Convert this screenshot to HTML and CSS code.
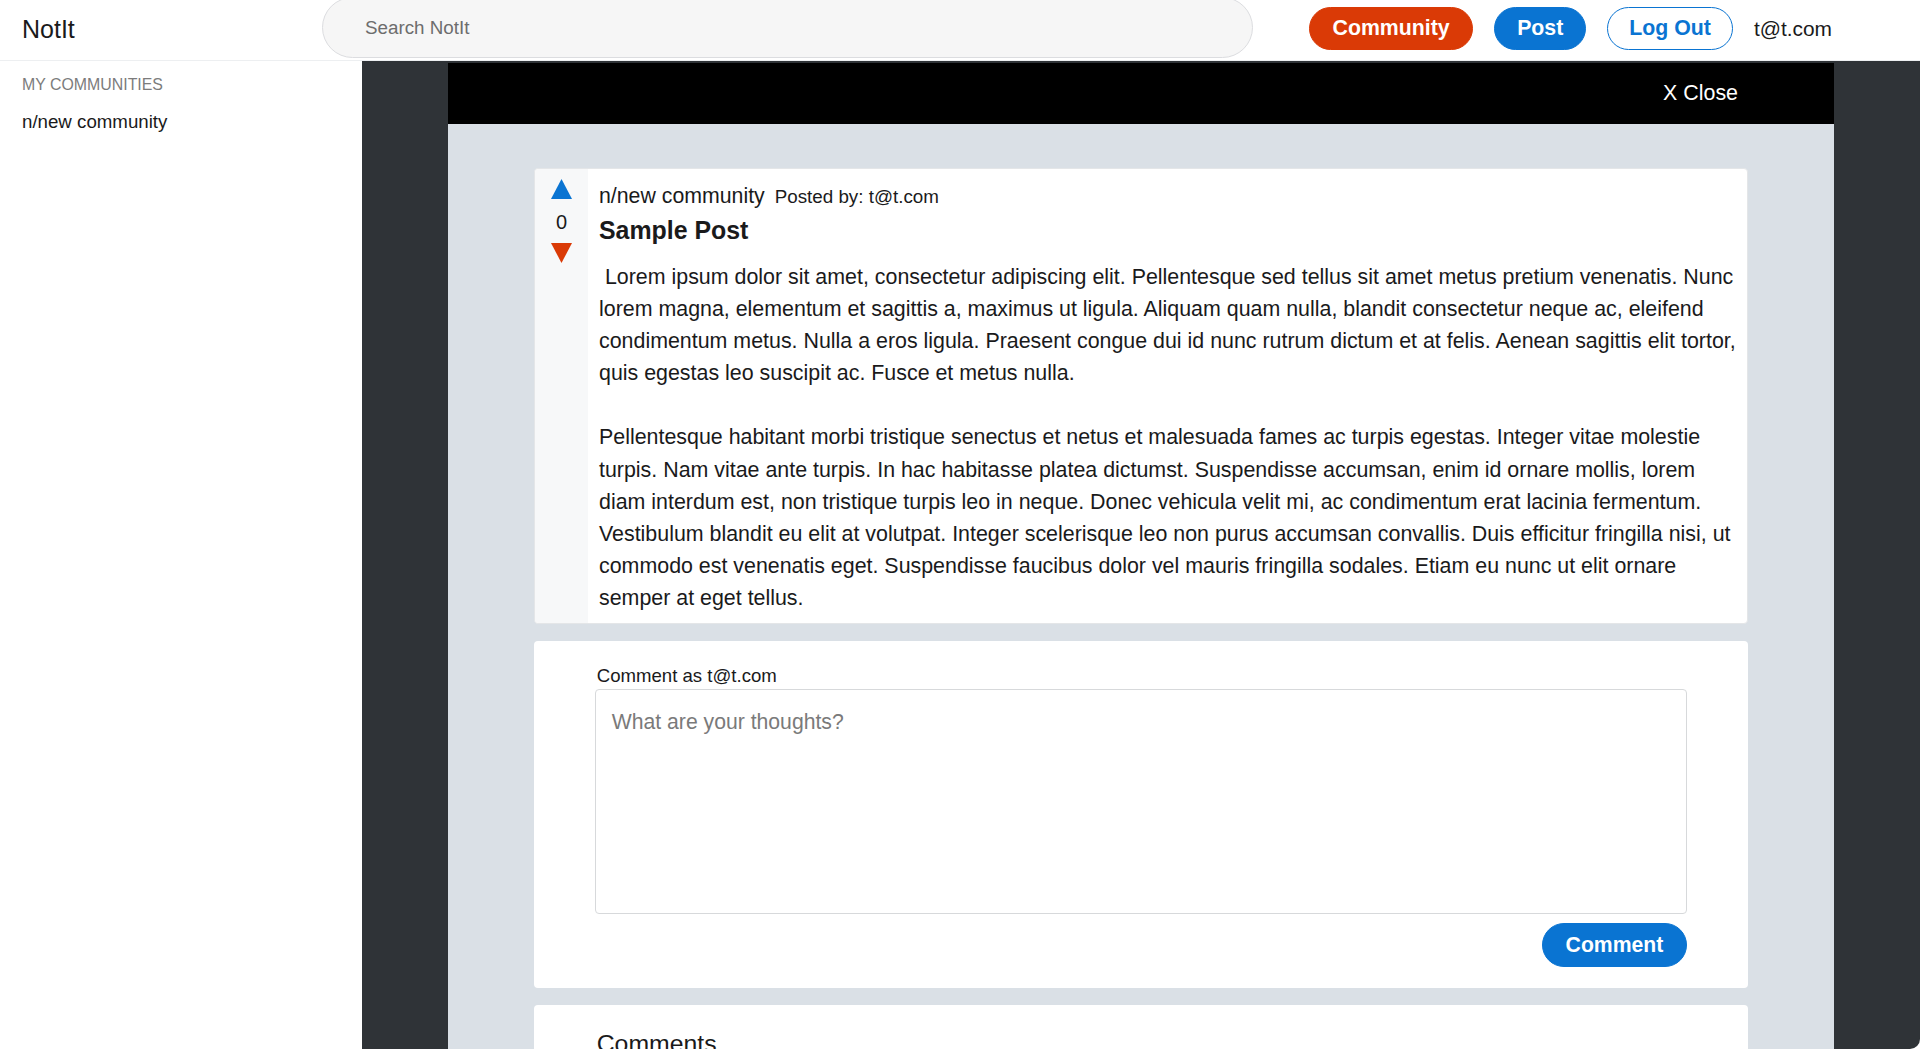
FILE: index.html
```html
<!DOCTYPE html>
<html lang="en">
<head>
<meta charset="utf-8">
<title>NotIt</title>
<link rel="stylesheet" href="styles.css">
</head>
<body>
<header class="topbar">
  <div class="logo">NotIt</div>
  <div class="search"><input class="search-input" type="text" placeholder="Search NotIt"></div>
  <nav class="actions">
    <button class="btn btn-orange">Community</button>
    <button class="btn btn-blue btn-post">Post</button>
    <button class="btn btn-outline">Log Out</button>
    <span class="user">t@t.com</span>
  </nav>
</header>
<div class="layout">
  <aside class="sidebar">
    <div class="side-title">My Communities</div>
    <div class="side-item">n/new community</div>
  </aside>
  <main class="overlay">
    <div class="modal">
      <div class="modal-bar"><span class="close">X Close</span></div>
      <div class="modal-body">
        <article class="post card">
          <div class="votes">
            <svg class="arrow" width="21" height="20" viewBox="0 0 21 20"><polygon points="10.5,0 21,20 0,20" fill="#0a74d2"/></svg>
            <div class="count">0</div>
            <svg class="arrow" width="21" height="20" viewBox="0 0 21 20"><polygon points="0,0 21,0 10.5,20" fill="#da3a06"/></svg>
          </div>
          <div class="post-content">
            <div class="meta"><span class="community">n/new community</span><span class="by">Posted by: t@t.com</span></div>
            <h1 class="title">Sample Post</h1>
            <div class="body-text"> Lorem ipsum dolor sit amet, consectetur adipiscing elit. Pellentesque sed tellus sit amet metus pretium venenatis. Nunc lorem magna, elementum et sagittis a, maximus ut ligula. Aliquam quam nulla, blandit consectetur neque ac, eleifend condimentum metus. Nulla a eros ligula. Praesent congue dui id nunc rutrum dictum et at felis. Aenean sagittis elit tortor, quis egestas leo suscipit ac. Fusce et metus nulla.

Pellentesque habitant morbi tristique senectus et netus et malesuada fames ac turpis egestas. Integer vitae molestie turpis. Nam vitae ante turpis. In hac habitasse platea dictumst. Suspendisse accumsan, enim id ornare mollis, lorem diam interdum est, non tristique turpis leo in neque. Donec vehicula velit mi, ac condimentum erat lacinia fermentum. Vestibulum blandit eu elit at volutpat. Integer scelerisque leo non purus accumsan convallis. Duis efficitur fringilla nisi, ut commodo est venenatis eget. Suspendisse faucibus dolor vel mauris fringilla sodales. Etiam eu nunc ut elit ornare semper at eget tellus.</div>
          </div>
        </article>
        <section class="card comment-box">
          <div class="inner">
            <div class="comment-label">Comment as t@t.com</div>
            <textarea class="comment-input" placeholder="What are your thoughts?"></textarea>
            <div class="comment-actions"><button class="btn btn-blue btn-comment">Comment</button></div>
          </div>
        </section>
        <section class="card comments">
          <div class="inner">
            <h2 class="comments-title">Comments</h2>
          </div>
        </section>
      </div>
    </div>
  </main>
</div>
</body>
</html>
```
FILE: styles.css
```css
* { box-sizing: border-box; }
html, body {
  margin: 0;
  height: 100%;
  overflow: hidden;
  background: #ffffff;
  font-family: "Liberation Sans", Arial, sans-serif;
  color: #1a1a1b;
}
.topbar {
  height: 61px;
  display: flex;
  align-items: flex-start;
  border-bottom: 1px solid #edeff1;
  background: #fff;
}
.logo {
  width: 322px;
  padding-left: 22px;
  font-size: 25px;
  line-height: 58px;
  color: #1a1a1b;
}
.search {
  width: 931px;
  height: 61px;
  margin-top: -3px;
}
.search-input {
  width: 100%;
  height: 100%;
  border: 1px solid #dcdde0;
  border-radius: 31px;
  background: #f6f6f6;
  padding: 0 0 0 42px;
  font-family: "Liberation Sans", Arial, sans-serif;
  font-size: 18.8px;
  color: #1a1a1b;
  outline: none;
}
.search-input::placeholder { color: #6d6d6d; }
.actions {
  display: flex;
  align-items: center;
  gap: 21px;
  margin-left: 56px;
  margin-top: 7px;
}
.btn {
  height: 43px;
  border-radius: 22px;
  padding: 0 22.5px;
  font-family: "Liberation Sans", Arial, sans-serif;
  font-weight: bold;
  font-size: 21.3px;
  border: 1px solid transparent;
  cursor: pointer;
}
.btn-orange { background: #da3a06; color: #fff; border-color: #da3a06; }
.btn-blue { background: #0a74d2; color: #fff; border-color: #0a74d2; }
.btn-post { padding: 0 22px; }
.btn-outline { background: #fff; color: #0a74d2; border-color: #0a74d2; padding: 0 21px; }
.user { font-size: 20.9px; color: #1a1a1b; margin-left: 0; }

.layout {
  display: flex;
  height: calc(100% - 61px);
}
.sidebar {
  width: 362px;
  flex: 0 0 362px;
  padding: 15px 0 0 22px;
  background: #fff;
}
.side-title {
  font-size: 15.9px;
  text-transform: uppercase;
  color: #7c7c7c;
  line-height: 18px;
}
.side-item {
  margin-top: 17px;
  font-size: 18.7px;
  color: #1a1a1b;
}
.overlay {
  flex: 1;
  background: #2f3337;
  padding-top: 2px;
  overflow: hidden;
  border-bottom-right-radius: 10px;
}
.modal {
  width: 1386px;
  margin: 0 auto;
  height: 100%;
  background: #dae0e6;
}
.modal-bar {
  height: 61px;
  background: #000;
  display: flex;
  align-items: center;
  justify-content: flex-end;
  padding-right: 96px;
}
.close {
  color: #fff;
  font-size: 21.4px;
}
.modal-body {
  padding: 44px 86px 0 86px;
  display: flex;
  flex-direction: column;
  gap: 17px;
}
.card {
  background: #fff;
  border-radius: 4px;
}
.post {
  display: flex;
  border: 1px solid #e4e6e8;
}
.votes {
  width: 53px;
  flex: 0 0 53px;
  background: #f7f8f9;
  display: flex;
  flex-direction: column;
  align-items: center;
  padding-top: 10px;
  border-radius: 4px 0 0 4px;
}
.arrow { display: block; }
.count {
  font-size: 20px;
  line-height: 24px;
  margin: 11px 0 9px;
}
.post-content {
  flex: 1;
  padding: 15px 8px 9px 11px;
}
.meta {
  display: flex;
  align-items: baseline;
  gap: 10px;
  line-height: 24px;
}
.community { font-size: 21.3px; }
.by { font-size: 18.8px; }
.title {
  margin: 7px 0 0;
  font-size: 24.9px;
  line-height: 28px;
  font-weight: bold;
}
.body-text {
  margin-top: 17px;
  font-size: 21.4px;
  line-height: 32.1px;
  white-space: pre-wrap;
}
.comment-box {
  padding: 24px 0 21px;
}
.inner {
  width: 90%;
  margin: 0 auto;
}
.comment-label {
  font-size: 18.6px;
  line-height: 22px;
  padding-left: 2px;
}
.comment-input {
  display: block;
  width: 100%;
  height: 225px;
  margin-top: 2px;
  border: 1px solid #d7d9db;
  border-radius: 4px;
  padding: 15px 16px;
  font-family: "Liberation Sans", Arial, sans-serif;
  font-size: 21.2px;
  line-height: 1.6;
  resize: none;
  outline: none;
}
.comment-input::placeholder { color: #7a7a7a; }
.comment-actions {
  display: flex;
  justify-content: flex-end;
  margin-top: 9px;
}
.btn-comment { height: 44px; padding: 0 23px; font-size: 21.2px; }
.comments {
  padding: 25px 0 40px;
  min-height: 120px;
}
.comments-title {
  margin: 0;
  padding-left: 2px;
  font-size: 24.8px;
  font-weight: normal;
  line-height: 28px;
}
```
